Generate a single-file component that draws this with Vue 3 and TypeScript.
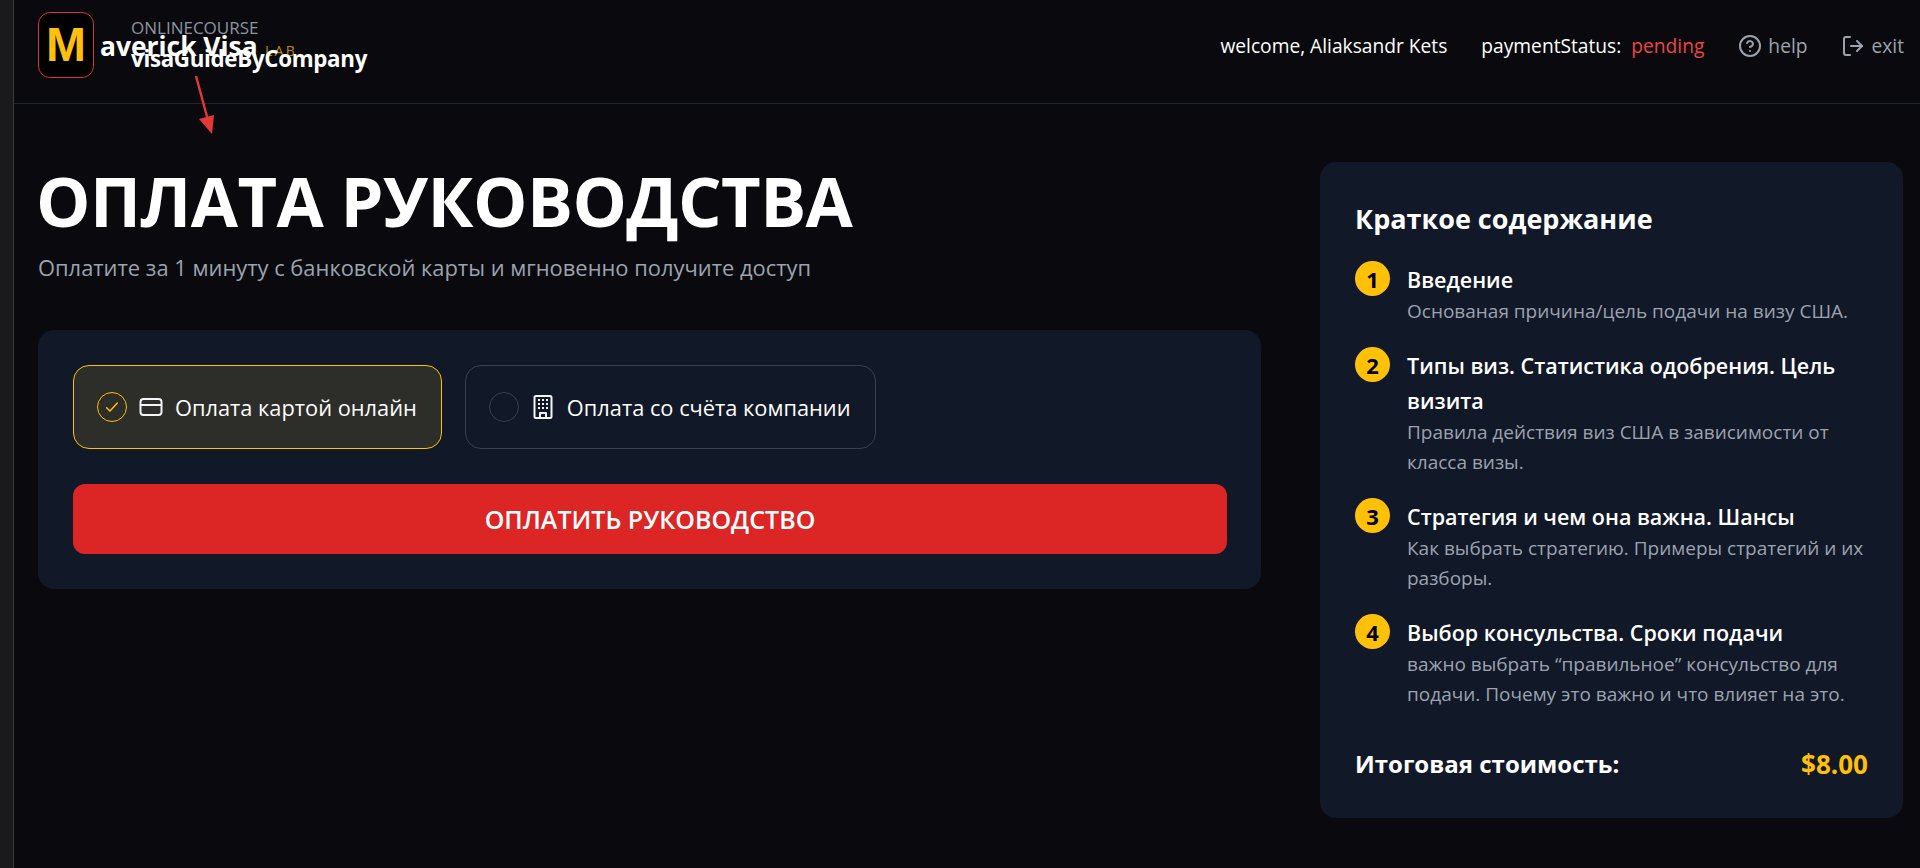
<script setup lang="ts">
interface Step {
  readonly num: number;
  readonly title: string;
  readonly desc: string;
}

const steps: Step[] = [
  { num: 1, title: 'Введение', desc: 'Основаная причина/цель подачи на визу США.' },
  {
    num: 2,
    title: 'Типы виз. Статистика одобрения. Цель визита',
    desc: 'Правила действия виз США в зависимости от класса визы.',
  },
  {
    num: 3,
    title: 'Стратегия и чем она важна. Шансы',
    desc: 'Как выбрать стратегию. Примеры стратегий и их разборы.',
  },
  {
    num: 4,
    title: 'Выбор консульства. Сроки подачи',
    desc: 'важно выбрать “правильное” консульство для подачи. Почему это важно и что влияет на это.',
  },
];
</script>

<template>
  <div class="page">
    <div class="strip" />
    <div class="content">
      <header class="header">
        <div class="brand">
          <div class="logo">M</div>
          <span class="brand-top">ONLINECOURSE</span>
          <span class="brand-lab">LAB</span>
          <span class="brand-name">averick Visa</span>
          <span class="brand-sub">visaGuideByCompany</span>
        </div>
        <nav class="nav">
          <span class="nav-item">welcome, Aliaksandr Kets</span>
          <span class="nav-item status">paymentStatus: <span class="pending">pending</span></span>
          <span class="nav-link">
            <svg width="24" height="24" viewBox="0 0 24 24" fill="none" stroke="currentColor" stroke-width="2" stroke-linecap="round" stroke-linejoin="round">
              <circle cx="12" cy="12" r="10" />
              <path d="M9.1 9a3 3 0 0 1 5.8 1c0 2-3 3-3 3" />
              <path d="M12 17h.01" />
            </svg>
            help
          </span>
          <span class="nav-link">
            <svg width="24" height="24" viewBox="0 0 24 24" fill="none" stroke="currentColor" stroke-width="2" stroke-linecap="round" stroke-linejoin="round">
              <path d="M9 3H5a2 2 0 0 0-2 2v14a2 2 0 0 0 2 2h4" />
              <path d="M10 12h11" />
              <path d="M16 7l5 5-5 5" />
            </svg>
            exit
          </span>
        </nav>
      </header>

      <svg class="arrow" width="40" height="70" viewBox="0 0 40 70">
        <path d="M6 4 L19 52" stroke="#e53935" stroke-width="2.4" fill="none" />
        <path d="M9 47 L24 43 L22 62 Z" fill="#e53935" />
      </svg>

      <main class="main">
        <section class="left">
          <h1 class="title">ОПЛАТА РУКОВОДСТВА</h1>
          <p class="subtitle">Оплатите за 1 минуту с банковской карты и мгновенно получите доступ</p>
          <div class="card">
            <div class="options">
              <div class="option active">
                <span class="radio">
                  <svg width="16" height="16" viewBox="0 0 24 24" fill="none" stroke="#ffc107" stroke-width="2.2" stroke-linecap="round" stroke-linejoin="round">
                    <path d="M4 13l5 5L20 6" />
                  </svg>
                </span>
                <svg width="24" height="24" viewBox="0 0 24 24" fill="none" stroke="#f3f4f6" stroke-width="2" stroke-linejoin="round">
                  <rect x="1.5" y="4" width="21" height="16" rx="3" />
                  <path d="M1.5 10h21" />
                </svg>
                <span>Оплата картой онлайн</span>
              </div>
              <div class="option">
                <span class="radio" />
                <svg width="24" height="26" viewBox="0 0 24 26">
                  <path fill="#f3f4f6" fill-rule="evenodd" d="M5 1h14a2.5 2.5 0 0 1 2.5 2.5v19A2.5 2.5 0 0 1 19 25H5a2.5 2.5 0 0 1-2.500-2.500v-19A2.500 2.500 0 0 1 5 1zM5 3a.5.5 0 0 0-.5.500v19a.5.5 0 0 0 .5.500h3v-4a1 1 0 0 1 1-1h6a1 1 0 0 1 1 1v4h3a.5.5 0 0 0 .5-.5v-19a.5.5 0 0 0-.5-.5zM10 20v3h4v-3z" />
                  <g fill="#f3f4f6">
                    <rect x="7" y="5" width="2" height="2" /><rect x="11" y="5" width="2" height="2" /><rect x="15" y="5" width="2" height="2" />
                    <rect x="7" y="9" width="2" height="2" /><rect x="11" y="9" width="2" height="2" /><rect x="15" y="9" width="2" height="2" />
                    <rect x="7" y="13" width="2" height="2" /><rect x="11" y="13" width="2" height="2" /><rect x="15" y="13" width="2" height="2" />
                  </g>
                </svg>
                <span>Оплата со счёта компании</span>
              </div>
            </div>
            <button class="pay" type="button">ОПЛАТИТЬ РУКОВОДСТВО</button>
          </div>
        </section>

        <aside class="summary">
          <h2 class="summary-title">Краткое содержание</h2>
          <ul class="steps">
            <li v-for="step in steps" :key="step.num" class="step">
              <span class="step-num">{{ step.num }}</span>
              <div>
                <div class="step-title">{{ step.title }}</div>
                <div class="step-desc">{{ step.desc }}</div>
              </div>
            </li>
          </ul>
          <div class="total">
            <span>Итоговая стоимость:</span>
            <span class="price">$8.00</span>
          </div>
        </aside>
      </main>
    </div>
  </div>
</template>

<style>
html,
body {
  margin: 0;
  background: #0a0a0e;
}
</style>

<style scoped>
.page {
  display: flex;
  min-height: 868px;
  background: #0a0a0e;
  color: #fff;
  font-family: "Open Sans", "Noto Sans", sans-serif;
}

.strip {
  box-sizing: border-box;
  flex-shrink: 0;
  width: 14px;
  background: #1a1a1c;
  border-right: 1px solid #3a3a3e;
}

.content {
  position: relative;
  flex: 1;
  min-width: 0;
}

.header {
  display: flex;
  align-items: center;
  justify-content: space-between;
  box-sizing: border-box;
  height: 104px;
  padding: 0 16px 14px 24px;
  border-bottom: 1px solid #1f2733;
}

.nav {
  display: flex;
  align-items: center;
  gap: 34px;
  padding-top: 2px;
  font-size: 19.2px;
}

.brand {
  position: relative;
  width: 340px;
  height: 66px;
}

.logo {
  display: flex;
  align-items: center;
  justify-content: center;
  box-sizing: border-box;
  width: 56px;
  height: 66px;
  border: 1.5px solid #d93636;
  border-radius: 12px;
  background: #000;
  color: #ffc107;
  font-family: "Liberation Sans", sans-serif;
  font-size: 48px;
  font-weight: 700;
}

.brand-top,
.brand-name,
.brand-lab,
.brand-sub {
  position: absolute;
  white-space: nowrap;
}

.brand-top {
  left: 93px;
  top: 4px;
  color: #8d93a0;
  font-size: 17px;
}

.brand-lab {
  left: 227px;
  top: 29px;
  color: #b8890c;
  font-size: 14px;
  letter-spacing: 2.3px;
}

.brand-name {
  left: 62px;
  top: 16px;
  font-size: 26.4px;
  font-weight: 700;
}

.brand-sub {
  left: 93px;
  top: 31px;
  font-size: 22.3px;
  font-weight: 700;
  letter-spacing: -0.3px;
}

.pending {
  margin-left: 5px;
  color: #ef4444;
}

.nav-link {
  display: flex;
  align-items: center;
  gap: 6px;
  color: #9ca3af;
}

.arrow {
  position: absolute;
  left: 176px;
  top: 72px;
}

.main {
  display: flex;
  align-items: flex-start;
  justify-content: space-between;
  padding: 58px 17px 0 24px;
}

.left {
  width: 1223px;
}

.title {
  margin: -3px 0 0 -2px;
  font-size: 68.5px;
  font-weight: 700;
  line-height: 84px;
  letter-spacing: -0.6px;
  color: #fff;
}

.subtitle {
  margin: 9px 0 0;
  font-size: 21.9px;
  line-height: 32px;
  color: #9ca3af;
}

.card {
  box-sizing: border-box;
  height: 259px;
  margin-top: 46px;
  padding: 35px 34px 35px 35px;
  border-radius: 16px;
  background: #111827;
}

.options {
  display: flex;
  gap: 23px;
}

.option {
  display: flex;
  align-items: center;
  gap: 12px;
  box-sizing: border-box;
  height: 84px;
  padding: 0 24px 0 23px;
  border: 1px solid #374151;
  border-radius: 16px;
  font-size: 21.8px;
}

.option.active {
  border-color: #ffc107;
  background: #2d2d29;
}

.radio {
  display: flex;
  align-items: center;
  justify-content: center;
  box-sizing: border-box;
  width: 30px;
  height: 30px;
  border: 1.5px solid #374151;
  border-radius: 50%;
}

.active .radio {
  border-color: #ffc107;
}

.pay {
  display: block;
  width: 100%;
  height: 70px;
  margin-top: 35px;
  border: 0;
  border-radius: 12px;
  background: #dc2626;
  color: #fff;
  font-family: inherit;
  font-size: 25px;
  font-weight: 600;
}

.summary {
  box-sizing: border-box;
  width: 583px;
  height: 656px;
  padding: 35px;
  border-radius: 16px;
  background: #111827;
}

.summary-title {
  margin: 0 0 20px;
  font-size: 27px;
  font-weight: 700;
  line-height: 44px;
}

.steps {
  display: flex;
  flex-direction: column;
  gap: 21px;
  margin: 0;
  padding: 0;
  list-style: none;
}

.step {
  display: flex;
  align-items: flex-start;
  gap: 17px;
}

.step-num {
  display: flex;
  align-items: center;
  justify-content: center;
  flex-shrink: 0;
  width: 35px;
  height: 35px;
  border-radius: 50%;
  background: #ffc107;
  color: #000;
  font-size: 22px;
  font-weight: 700;
}

.step-title {
  margin-top: 1px;
  margin-bottom: -1px;
  font-size: 21.5px;
  font-weight: 600;
  line-height: 35px;
}

.step-desc {
  font-size: 19px;
  line-height: 30px;
  color: #9ca3af;
}

.total {
  display: flex;
  justify-content: space-between;
  margin-top: 37px;
  font-size: 24px;
  font-weight: 700;
  line-height: 36px;
}

.price {
  color: #ffc107;
  font-size: 26px;
}
</style>
